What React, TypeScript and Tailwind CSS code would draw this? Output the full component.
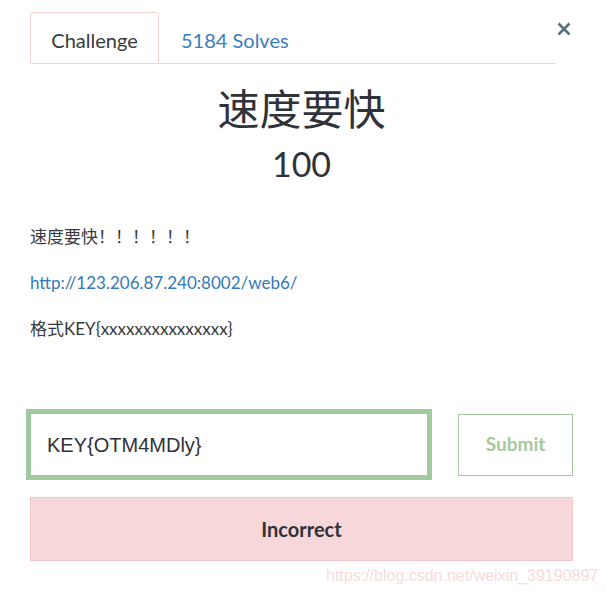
import React from "react";

const LATO = "font-['Lato','Noto_Sans_CJK_SC',sans-serif]";

export default function App() {
  return (
    <div className={`relative w-[607px] h-[595px] bg-white text-[#373a3c] ${LATO}`}>
      <div className="pt-[12px]">
        <div className="ml-[30px] w-[526px] flex border-b border-[#f6d3d3]">
          <div className="-mb-px w-[129px] h-[51px] flex items-center justify-center pt-[4px] border border-[#f6d3d3] border-b-white rounded-t-[4px] bg-white text-[20px] text-[#373a3c]">
            Challenge
          </div>
          <div className="h-[51px] flex items-center pt-[4px] pl-[22px] text-[20px] text-[#3b7dc0]">
            5184 Solves
          </div>
        </div>
      </div>
      <svg className="absolute left-[557px] top-[22px]" width="14" height="14" viewBox="0 0 14 14">
        <path d="M1.5 1.5 L12.5 12.5 M12.5 1.5 L1.5 12.5" stroke="#5b6f84" strokeWidth="2.6" strokeLinecap="butt" />
      </svg>

      <div className="ml-[30px] w-[543px]">
        <div className="mt-[18px] text-center text-[42px] leading-[50px] font-['Noto_Sans_CJK_SC',sans-serif] text-[#2f3238]">
          速度要快
        </div>
        <div className="mt-[12px] text-center text-[34px] leading-[40px] text-[#2f3238]">100</div>

        <p className="mt-[41px] text-[17px] leading-[24px]">速度要快！！！！！！</p>
        <p className="mt-[22px] text-[17px] leading-[24px] text-[#337ab7]">http://123.206.87.240:8002/web6/</p>
        <p className="mt-[22px] text-[17px] leading-[24px]">格式KEY{"{"}xxxxxxxxxxxxxxx{"}"}</p>
      </div>

      <div className="mt-[68px] ml-[26px] flex items-center">
        <div className="w-[406px] h-[71px] border-[5px] border-[#a3c99e] flex items-center pl-[16px] text-[20px] text-[#2f3238] font-['Liberation_Sans',sans-serif]">
          KEY{"{"}OTM4MDly{"}"}
        </div>
        <div className="ml-[26px] w-[115px] h-[62px] border border-[#a3c99e] flex items-center justify-center text-[19px] font-bold text-[#a3c99e]">
          Submit
        </div>
      </div>

      <div className="mt-[17px] ml-[30px] w-[543px] h-[64px] bg-[#f8d7da] border border-[#f5c6cb] flex items-center justify-center text-[20px] font-bold text-[#2f3238]">
        Incorrect
      </div>

      <div className="absolute left-[326px] top-[566px] text-[16px] leading-[20px] text-[#f6dcdd] font-['Liberation_Sans',sans-serif]">
        https://blog.csdn.net/weixin_39190897
      </div>
    </div>
  );
}
